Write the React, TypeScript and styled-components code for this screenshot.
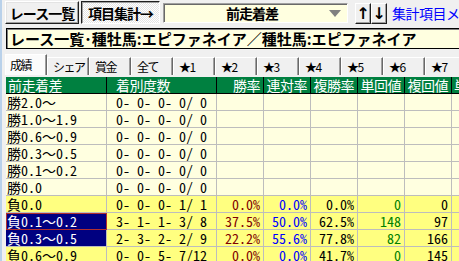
import React from "react";
import styled, { createGlobalStyle, css } from "styled-components";

const MONO = `"Noto Sans Mono CJK JP", "Noto Sans CJK JP", "DejaVu Sans Mono", monospace`;
const UI = `"Noto Sans CJK JP", "Noto Sans", sans-serif`;

const Global = createGlobalStyle`
  html, body { margin: 0; padding: 0; background: #f0f0f0; overflow: hidden; }
  #root { width: 459px; height: 261px; overflow: hidden; }
`;

const Window = styled.div`
  width: 459px;
  height: 261px;
  box-sizing: border-box;
  border-left: 2px solid #b9d1ea;
  padding-left: 3px;
  overflow: hidden;
  display: flex;
  flex-direction: column;
  background: #f0f0f0;
`;

const Toolbar = styled.div`
  display: flex;
  align-items: flex-start;
  height: 26px;
  padding-top: 1px;
  box-sizing: border-box;
  gap: 2px;
  flex-shrink: 0;
  white-space: nowrap;
`;

const ToolButton = styled.div<{ $pressed?: boolean; $w: number }>`
  box-sizing: border-box;
  width: ${(p) => p.$w}px;
  height: 23px;
  flex-shrink: 0;
  display: flex;
  align-items: center;
  justify-content: center;
  font: bold 14px ${UI};
  letter-spacing: -1px;
  line-height: 20px;
  color: #000;
  background: #f0f0f0;
  border: 1px solid;
  border-color: #ffffff #202020 #202020 #ffffff;
  box-shadow: inset -1px -1px 0 #a0a0a0, inset 1px 1px 0 #e3e3e3;
  ${(p) =>
    p.$pressed &&
    css`
      border-color: #202020 #ffffff #ffffff #202020;
      box-shadow: inset 1px 1px 0 #a0a0a0;
      background-color: #ffffff;
      background-image: repeating-conic-gradient(#ffffff 0 25%, #e4e4e4 0 50%);
      background-size: 2px 2px;
    `}
`;

const Combo = styled.div`
  box-sizing: border-box;
  width: 185px;
  height: 20px;
  margin: 2px 0 0 1px;
  flex-shrink: 0;
  display: flex;
  align-items: center;
  padding-left: 18px;
  background: #ffffe0;
  border: 1px solid;
  border-color: #a0a0a0 #ffffff #ffffff #a0a0a0;
  box-shadow: inset 1px 1px 0 #696969;
`;

const ComboText = styled.span`
  flex: 1;
  text-align: center;
  font: bold 14px ${UI};
  line-height: 18px;
  letter-spacing: -1px;
  color: #000;
`;

const ComboArrow = styled.span`
  width: 0;
  height: 0;
  margin: 1px 6px 0 7px;
  border-left: 6px solid transparent;
  border-right: 6px solid transparent;
  border-top: 7px solid #808080;
`;

const ArrowBtn = styled.div<{ $first?: boolean }>`
  box-sizing: border-box;
  width: 16px;
  height: 21px;
  margin: 2px 0 0 ${(p) => (p.$first ? 5 : -2)}px;
  flex-shrink: 0;
  display: flex;
  align-items: center;
  justify-content: center;
  font: bold 16px "DejaVu Sans", sans-serif;
  line-height: 18px;
  color: #000;
  background: #f0f0f0;
  border: 1px solid;
  border-color: #ffffff #202020 #202020 #ffffff;
  box-shadow: inset -1px -1px 0 #a0a0a0;
`;

const MenuLink = styled.span`
  margin: 3px 0 0 3px;
  font: 14px ${UI};
  letter-spacing: -0.5px;
  color: #0000ff;
  line-height: 18px;
`;

const TitleBox = styled.div`
  box-sizing: border-box;
  margin: 2px 0 0 1px;
  width: 470px;
  height: 21px;
  flex-shrink: 0;
  display: flex;
  align-items: center;
  padding-left: 3px;
  background: #ffffe0;
  border: 1px solid #000;
  box-shadow: inset 1px 1px 0 #808080;
  font: bold 15px ${UI};
  line-height: 18px;
  letter-spacing: 0px;
  color: #000;
  white-space: nowrap;
`;

const TabsRow = styled.div`
  box-sizing: border-box;
  height: 24px;
  margin-top: 4px;
  padding-bottom: 2px;
  flex-shrink: 0;
  display: flex;
  align-items: flex-end;
  white-space: nowrap;
`;

const Tab = styled.div<{ $active?: boolean }>`
  box-sizing: border-box;
  width: 42px;
  flex-shrink: 0;
  height: ${(p) => (p.$active ? 21 : 18)}px;
  display: flex;
  align-items: center;
  padding-left: ${(p) => (p.$active ? 4 : 5)}px;
  font: 12px ${UI};
  line-height: 16px;
  letter-spacing: -1.5px;
  color: #000;
  background: ${(p) => (p.$active ? "#fbfbfb" : "#f0f0f0")};
  border-top: 1px solid #ffffff;
  border-left: 1px solid #ffffff;
  border-right: 1px solid #696969;
  box-shadow: inset -1px 0 0 #a0a0a0;
  overflow: hidden;
`;

const COLS = "101px 110px 47px 47px 47px 47px 47px 60px";

const Table = styled.div`
  margin-left: 1px;
  display: flex;
  flex-direction: column;
  font-family: ${MONO};
`;

const HeadRow = styled.div`
  display: grid;
  grid-template-columns: ${COLS};
  height: 16px;
  background: #008040;
  border-bottom: 1px solid #000;
  flex-shrink: 0;
`;

const HeadCell = styled.div<{ $align: "left" | "right"; $pl?: number }>`
  box-sizing: border-box;
  border-right: 1px solid #000;
  color: #fff;
  font: 14px ${UI};
  letter-spacing: -0.5px;
  line-height: 16px;
  height: 16px;
  overflow: hidden;
  white-space: nowrap;
  text-align: ${(p) => p.$align};
  padding: 0 3px 0 ${(p) => p.$pl ?? 2}px;
`;

const Row = styled.div<{ $bg: string }>`
  display: grid;
  grid-template-columns: ${COLS};
  height: 17px;
  background: ${(p) => p.$bg};
  flex-shrink: 0;
`;

const Cell = styled.div<{
  $align: "left" | "right";
  $color?: string;
  $pl?: number;
  $sel?: boolean;
  $focus?: boolean;
}>`
  box-sizing: border-box;
  height: 17px;
  border-right: 1px solid #bdbdbd;
  border-bottom: 1px solid #bdbdbd;
  font-size: 14px;
  line-height: 16px;
  white-space: pre;
  overflow: hidden;
  text-align: ${(p) => p.$align};
  padding: 0 3px 0 ${(p) => p.$pl ?? 1}px;
  color: ${(p) => p.$color ?? "#000"};
  ${(p) =>
    p.$sel &&
    css`
      background: #000080;
      color: #fff;
    `}
  ${(p) =>
    p.$focus &&
    css`
      outline: 1px solid #b03030;
      outline-offset: -1px;
    `}
`;

type RowData = {
  label: string;
  counts: string;
  win?: string;
  ren?: string;
  fuku?: string;
  tan?: string;
  fukuKai?: string;
  lose?: boolean;
  sel?: boolean;
  focus?: boolean;
};

const rows: RowData[] = [
  { label: "勝2.0～", counts: "0- 0- 0- 0/ 0" },
  { label: "勝1.0～1.9", counts: "0- 0- 0- 0/ 0" },
  { label: "勝0.6～0.9", counts: "0- 0- 0- 0/ 0" },
  { label: "勝0.3～0.5", counts: "0- 0- 0- 0/ 0" },
  { label: "勝0.1～0.2", counts: "0- 0- 0- 0/ 0" },
  { label: "勝0.0", counts: "0- 0- 0- 0/ 0" },
  { label: "負0.0", counts: "0- 0- 0- 1/ 1", win: "0.0%", ren: "0.0%", fuku: "0.0%", tan: "0", fukuKai: "0", lose: true },
  { label: "負0.1～0.2", counts: "3- 1- 1- 3/ 8", win: "37.5%", ren: "50.0%", fuku: "62.5%", tan: "148", fukuKai: "97", lose: true, sel: true, focus: true },
  { label: "負0.3～0.5", counts: "2- 3- 2- 2/ 9", win: "22.2%", ren: "55.6%", fuku: "77.8%", tan: "82", fukuKai: "166", lose: true, sel: true },
  { label: "負0.6～0.9", counts: "0- 0- 5- 7/12", win: "0.0%", ren: "0.0%", fuku: "41.7%", tan: "0", fukuKai: "145", lose: true },
];

const tabs = ["成績", "シェア", "賞金", "全て", "★1", "★2", "★3", "★4", "★5", "★6", "★7"];

export default function App() {
  return (
    <>
      <Global />
      <Window>
        <Toolbar>
          <ToolButton $w={74}>レース一覧</ToolButton>
          <ToolButton $w={79} $pressed>
            項目集計→
          </ToolButton>
          <Combo>
            <ComboText>前走着差</ComboText>
            <ComboArrow />
          </Combo>
          <ArrowBtn $first>↑</ArrowBtn>
          <ArrowBtn>↓</ArrowBtn>
          <MenuLink>集計項目メニュー</MenuLink>
        </Toolbar>
        <TitleBox>レース一覧･種牡馬:エピファネイア／種牡馬:エピファネイア</TitleBox>
        <TabsRow>
          {tabs.map((t, i) => (
            <Tab key={t} $active={i === 0}>
              {t}
            </Tab>
          ))}
        </TabsRow>
        <Table>
          <HeadRow>
            <HeadCell $align="left">前走着差</HeadCell>
            <HeadCell $align="left" $pl={9}>
              着別度数
            </HeadCell>
            <HeadCell $align="right">勝率</HeadCell>
            <HeadCell $align="right">連対率</HeadCell>
            <HeadCell $align="right">複勝率</HeadCell>
            <HeadCell $align="right">単回値</HeadCell>
            <HeadCell $align="right">複回値</HeadCell>
            <HeadCell $align="left">単回</HeadCell>
          </HeadRow>
          {rows.map((r) => (
            <Row key={r.label} $bg={r.lose ? "#ffff80" : "#ffffe0"}>
              <Cell $align="left" $sel={r.sel} $focus={r.focus}>
                {r.label}
              </Cell>
              <Cell $align="left" $pl={9}>
                {r.counts}
              </Cell>
              <Cell $align="right" $color="#800000">
                {r.win ?? ""}
              </Cell>
              <Cell $align="right" $color="#0000ff">
                {r.ren ?? ""}
              </Cell>
              <Cell $align="right">{r.fuku ?? ""}</Cell>
              <Cell $align="right" $color="#008000">
                {r.tan ?? ""}
              </Cell>
              <Cell $align="right">{r.fukuKai ?? ""}</Cell>
              <Cell $align="right" />
            </Row>
          ))}
        </Table>
      </Window>
    </>
  );
}
